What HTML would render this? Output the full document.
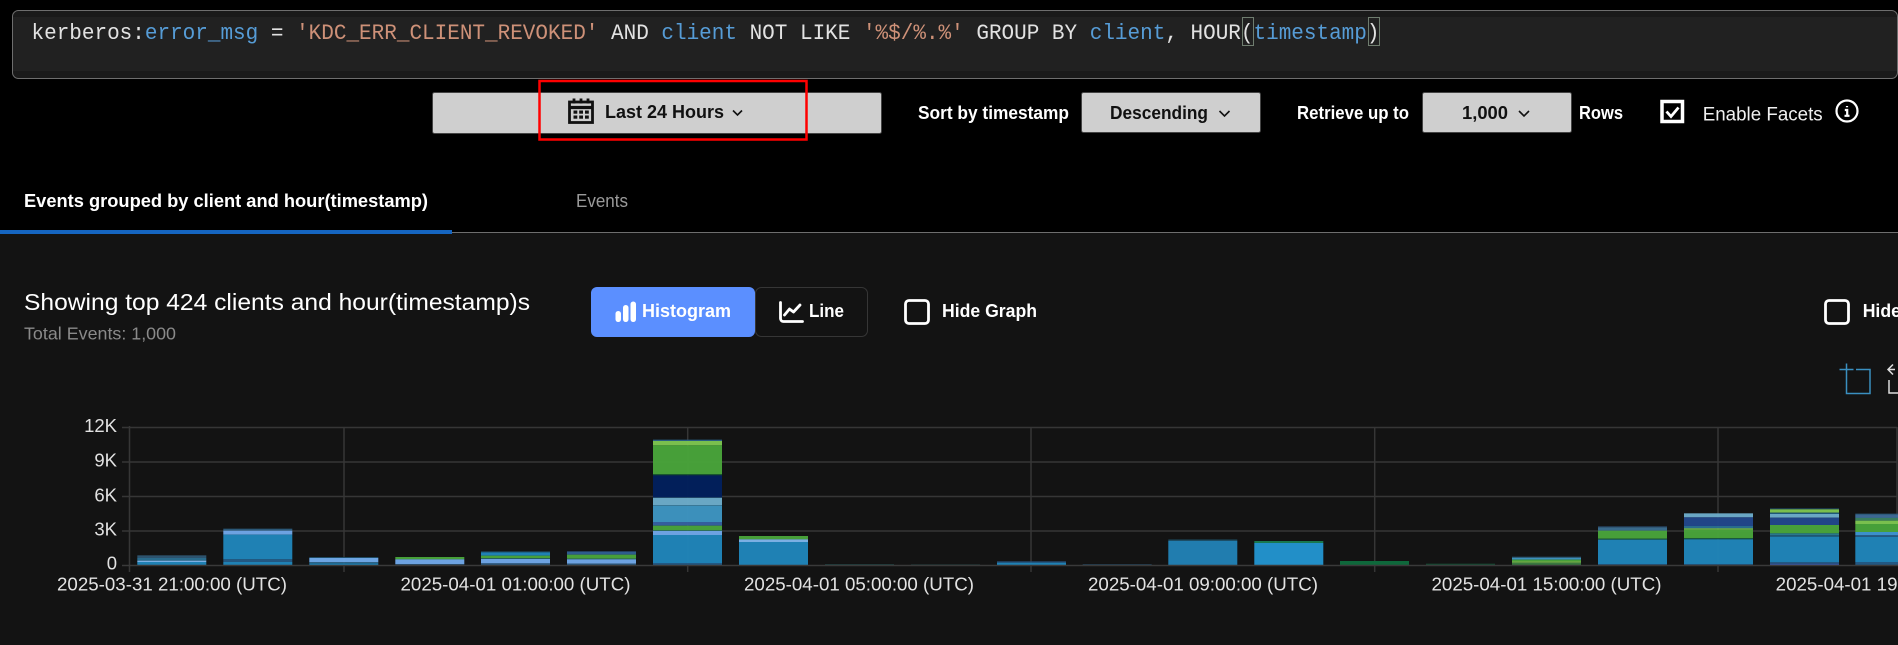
<!DOCTYPE html>
<html><head><meta charset="utf-8"><style>
html,body{margin:0;padding:0;background:#000;width:1898px;height:645px;overflow:hidden}
svg{position:absolute;left:0;top:0;display:block}
text{font-family:"Liberation Sans",sans-serif;white-space:pre}
.b{font-weight:700;fill:#fff;font-size:18px}
.d{font-weight:700;fill:#111;font-size:18px}
.a{fill:#e2e2e2;font-size:18.500px}
.m{font-family:"Liberation Mono",monospace;font-size:22.500px;fill:#e2e2e2}
.u{fill:#569cd6}.s{fill:#ce9178}
</style></head><body>
<svg width="1898" height="645" viewBox="0 0 1898 645" xmlns="http://www.w3.org/2000/svg">
<rect width="1898" height="645" fill="#000"/>
<!-- query -->
<rect x="12.500" y="10.500" width="1885" height="68" rx="6" fill="#1a1a1a" stroke="#6e6e6e"/>
<rect x="13" y="17" width="1884" height="54" fill="#212121"/>
<text class="m" x="31.500" y="39" textLength="1348" lengthAdjust="spacingAndGlyphs">kerberos:<tspan class="u">error_msg</tspan> = <tspan class="s">'KDC_ERR_CLIENT_REVOKED'</tspan> AND <tspan class="u">client</tspan> NOT LIKE <tspan class="s">'%$/%.%'</tspan> GROUP BY <tspan class="u">client</tspan>, HOUR(<tspan class="u">timestamp</tspan>)</text>
<rect x="1242.500" y="17.500" width="11" height="28" fill="none" stroke="#6f7d6f"/>
<rect x="1368.500" y="17.500" width="11" height="28" fill="none" stroke="#6f7d6f"/>
<!-- controls -->
<rect x="432.500" y="92.500" width="449" height="41" rx="2" fill="#cfcfcf" stroke="#444"/>
<rect x="1081.500" y="92.500" width="179" height="40" rx="2" fill="#cfcfcf" stroke="#444"/>
<rect x="1422.500" y="92.500" width="149" height="40" rx="2" fill="#cfcfcf" stroke="#444"/>
<rect x="539.500" y="81" width="267" height="58.500" fill="none" stroke="#f00" stroke-width="2.500"/>
<!-- calendar -->
<g fill="none" stroke="#111">
<rect x="569.500" y="102" width="23" height="20.500" stroke-width="2.800"/>
<path d="M569.500 107.500h23" stroke-width="3.200"/>
<path d="M574 98.500v5M581 98.500v5M588 98.500v5" stroke-width="2.800"/>
</g>
<g fill="#111"><rect x="573.500" y="110.500" width="3.800" height="3.200"/><rect x="579.200" y="110.500" width="3.800" height="3.200"/><rect x="585" y="110.500" width="3.800" height="3.200"/><rect x="573.500" y="115.500" width="3.800" height="3.200"/><rect x="579.200" y="115.500" width="3.800" height="3.200"/><rect x="585" y="115.500" width="3.800" height="3.200"/></g>
<text class="d" x="605" y="118" textLength="119" lengthAdjust="spacingAndGlyphs">Last 24 Hours</text>
<path d="M733 110.500l4.500 4.500 4.500-4.500" fill="none" stroke="#111" stroke-width="1.600"/>
<text class="b" x="918" y="119" textLength="151" lengthAdjust="spacingAndGlyphs">Sort by timestamp</text>
<text class="d" x="1110" y="119" textLength="98" lengthAdjust="spacingAndGlyphs">Descending</text>
<path d="M1219.500 111l5 5 5-5" fill="none" stroke="#111" stroke-width="1.600"/>
<text class="b" x="1297" y="119" textLength="112" lengthAdjust="spacingAndGlyphs">Retrieve up to</text>
<text class="d" x="1462" y="119" textLength="46" lengthAdjust="spacingAndGlyphs">1,000</text>
<path d="M1519 111l5 5 5-5" fill="none" stroke="#111" stroke-width="1.600"/>
<text class="b" x="1579" y="119" textLength="44" lengthAdjust="spacingAndGlyphs">Rows</text>
<rect x="1662" y="101.500" width="20.500" height="20" fill="#000" stroke="#fff" stroke-width="3.500"/>
<path d="M1666.500 111.500l4.500 5 7.500-9" fill="none" stroke="#fff" stroke-width="2.800"/>
<text x="1702.700" y="120.500" fill="#f0f0f0" font-size="19" textLength="120" lengthAdjust="spacingAndGlyphs">Enable Facets</text>
<circle cx="1847" cy="111" r="10.500" fill="none" stroke="#fff" stroke-width="2.200"/>
<path d="M1847 106v1.200M1844.800 110h2.400v5.500M1844.500 115.800h5" fill="none" stroke="#fff" stroke-width="2.200"/>
<!-- tabs -->
<text class="b" x="24" y="207" textLength="404" lengthAdjust="spacingAndGlyphs">Events grouped by client and hour(timestamp)</text>
<text x="576" y="207" fill="#9a9a9a" font-size="18" textLength="52" lengthAdjust="spacingAndGlyphs">Events</text>
<rect x="0" y="233" width="1898" height="412" fill="#131313"/>
<rect x="452" y="232" width="1446" height="1" fill="#6e6e6e"/>
<rect x="0" y="230" width="452" height="4" fill="#1565c0"/>
<!-- heading -->
<text x="24" y="310" fill="#fff" font-size="23.500" textLength="506" lengthAdjust="spacingAndGlyphs">Showing top 424 clients and hour(timestamp)s</text>
<text x="24" y="339.500" fill="#8a8a8a" font-size="17.500" textLength="152" lengthAdjust="spacingAndGlyphs">Total Events: 1,000</text>
<rect x="755.500" y="287.500" width="112" height="49" rx="6" fill="#131313" stroke="#363636"/>
<rect x="591" y="287" width="164" height="50" rx="6" fill="#5b8fff"/>
<g fill="#fff"><rect x="615.500" y="311" width="5.500" height="11" rx="2.700"/><rect x="623" y="305" width="5.500" height="17" rx="2.700"/><rect x="630.500" y="301.500" width="5.500" height="20.500" rx="2.700"/></g>
<text class="b" x="642" y="317" textLength="89" lengthAdjust="spacingAndGlyphs">Histogram</text>
<path d="M780.500 302.500v16a3 3 0 0 0 3 3h19M784.500 315l5-6 4 3 6.500-7" fill="none" stroke="#fff" stroke-width="2.800" stroke-linecap="round" stroke-linejoin="round"/>
<text class="b" x="809" y="317" textLength="35" lengthAdjust="spacingAndGlyphs">Line</text>
<rect x="905.500" y="300.500" width="23" height="23" rx="3.500" fill="none" stroke="#fff" stroke-width="2.800"/>
<text class="b" x="942" y="317" textLength="95" lengthAdjust="spacingAndGlyphs">Hide Graph</text>
<rect x="1825.500" y="300.500" width="23" height="23" rx="3.500" fill="none" stroke="#fff" stroke-width="2.800"/>
<text class="b" x="1862.700" y="317" textLength="95" lengthAdjust="spacingAndGlyphs">Hide Graph</text>
<!-- brush -->
<path d="M1839.500 369.500h14M1846.500 363.500v14M1846.500 377.500v16h23.500v-24h-14" fill="none" stroke="#3a8fc0" stroke-width="1.500"/>
<path d="M1895 369.500h-6m4-5l-5 5 5 5M1889 380v13h9" fill="none" stroke="#ddd" stroke-width="1.500"/>
<!-- grid -->
<g stroke="#363636" stroke-width="1.500" fill="none">
<path d="M122 427.500H1897M122 462H1897M122 496.500H1897M122 531H1897"/>
<path d="M129.500 426V572M344 427V572M687.700 427V572M1031 427V572M1374.700 427V572M1718 427V572M1897 427V566"/>
</g>
<!-- bars: y in 3x zoom units -->
<g transform="translate(0 410) scale(1 .33333)" fill-opacity=".98">
<g><rect x="137.300" y="436" width="69" height="8" fill="#2e5570"/><rect x="137.300" y="444" width="69" height="8" fill="#2a6d8f"/><rect x="137.300" y="452" width="69" height="4" fill="#7eb3e8"/><rect x="137.300" y="456" width="69" height="10" fill="#2084b8"/></g>
<g><rect x="223.300" y="356" width="69" height="6" fill="#2c5a7a"/><rect x="223.300" y="362" width="69" height="12" fill="#6fa5e5"/><rect x="223.300" y="374" width="69" height="74" fill="#2084b8"/><rect x="223.300" y="448" width="69" height="8" fill="#245a85"/><rect x="223.300" y="456" width="69" height="10" fill="#2084b8"/></g>
<g><rect x="309.300" y="441" width="69" height="3" fill="#1f4a63"/><rect x="309.300" y="444" width="69" height="13" fill="#6fa8e8"/><rect x="309.300" y="457" width="69" height="3" fill="#1f5a7a"/><rect x="309.300" y="460" width="69" height="6" fill="#2084b8"/></g>
<g><rect x="395.300" y="441" width="69" height="7" fill="#48a23a"/><rect x="395.300" y="448" width="69" height="14" fill="#6fa5e5"/><rect x="395.300" y="462" width="69" height="4" fill="#2a5070"/></g>
<g><rect x="481" y="424" width="69" height="3" fill="#1f4a63"/><rect x="481" y="427" width="69" height="10" fill="#2084b8"/><rect x="481" y="437" width="69" height="8" fill="#48a23a"/><rect x="481" y="445" width="69" height="2" fill="#1f5a7a"/><rect x="481" y="447" width="69" height="13" fill="#6fa5e5"/><rect x="481" y="460" width="69" height="6" fill="#2a5a80"/></g>
<g><rect x="567" y="423" width="69" height="3" fill="#243f60"/><rect x="567" y="426" width="69" height="8" fill="#2f5e90"/><rect x="567" y="434" width="69" height="12" fill="#48a23a"/><rect x="567" y="446" width="69" height="2" fill="#2a6d70"/><rect x="567" y="448" width="69" height="13" fill="#6fa5e5"/><rect x="567" y="461" width="69" height="5" fill="#2a5a80"/></g>
<g><rect x="653" y="89" width="69" height="4" fill="#2a5f85"/><rect x="653" y="93" width="69" height="13" fill="#7cc350"/><rect x="653" y="106" width="69" height="86" fill="#48a23a"/><rect x="653" y="192" width="69" height="4" fill="#1a5a30"/><rect x="653" y="196" width="69" height="66" fill="#02205c"/><rect x="653" y="262" width="69" height="2" fill="#2a5a7a"/><rect x="653" y="264" width="69" height="21" fill="#6caac8"/><rect x="653" y="285" width="69" height="3" fill="#3a7a9a"/><rect x="653" y="288" width="69" height="48" fill="#3d93bf"/><rect x="653" y="336" width="69" height="11" fill="#35609f"/><rect x="653" y="347" width="69" height="14" fill="#48a23a"/><rect x="653" y="361" width="69" height="2" fill="#2a6d70"/><rect x="653" y="363" width="69" height="12" fill="#6fa5e5"/><rect x="653" y="375" width="69" height="84" fill="#2084b8"/><rect x="653" y="459" width="69" height="7" fill="#245a85"/></g>
<g><rect x="739" y="378" width="69" height="10" fill="#48a23a"/><rect x="739" y="388" width="69" height="8" fill="#7db2e8"/><rect x="739" y="396" width="69" height="70" fill="#2084b8"/></g>
<rect x="825" y="462" width="69" height="4" fill="#1c3a3a"/>
<rect x="911" y="463" width="69" height="3" fill="#1c3a3a"/>
<g><rect x="997" y="454" width="69" height="4" fill="#27507a"/><rect x="997" y="458" width="69" height="8" fill="#2084b8"/></g>
<rect x="1082.700" y="462" width="69" height="4" fill="#1f3a4f"/>
<g><rect x="1168.300" y="388" width="69" height="4" fill="#1c3f4f"/><rect x="1168.300" y="392" width="69" height="74" fill="#2280b3"/></g>
<g><rect x="1254.300" y="393" width="69" height="6" fill="#1a7a50"/><rect x="1254.300" y="399" width="69" height="67" fill="#2392cc"/></g>
<rect x="1340" y="453" width="69" height="13" fill="#0e6a3c"/>
<rect x="1426" y="461" width="69" height="5" fill="#144a33"/>
<g><rect x="1512" y="440" width="69" height="3" fill="#284f66"/><rect x="1512" y="443" width="69" height="6" fill="#3d93bf"/><rect x="1512" y="449" width="69" height="5" fill="#48a23a"/><rect x="1512" y="454" width="69" height="4" fill="#7cc350"/><rect x="1512" y="458" width="69" height="8" fill="#3a7a40"/></g>
<g><rect x="1598" y="349" width="69" height="3" fill="#2a4a6a"/><rect x="1598" y="352" width="69" height="10" fill="#3a6c8f"/><rect x="1598" y="362" width="69" height="24" fill="#48a23a"/><rect x="1598" y="386" width="69" height="3" fill="#1a5a40"/><rect x="1598" y="389" width="69" height="73" fill="#2084b8"/><rect x="1598" y="462" width="69" height="4" fill="#245a85"/></g>
<g><rect x="1684" y="310" width="69" height="12" fill="#6caac8"/><rect x="1684" y="322" width="69" height="26" fill="#22468a"/><rect x="1684" y="348" width="69" height="7" fill="#2a6d90"/><rect x="1684" y="355" width="69" height="4" fill="#7cc350"/><rect x="1684" y="359" width="69" height="25" fill="#48a23a"/><rect x="1684" y="384" width="69" height="4" fill="#1a5a40"/><rect x="1684" y="388" width="69" height="74" fill="#2084b8"/><rect x="1684" y="462" width="69" height="4" fill="#245a85"/></g>
<g><rect x="1770" y="295" width="69" height="3" fill="#1f4a63"/><rect x="1770" y="298" width="69" height="10" fill="#7cc350"/><rect x="1770" y="308" width="69" height="4" fill="#1f5a7a"/><rect x="1770" y="312" width="69" height="11" fill="#6caac8"/><rect x="1770" y="323" width="69" height="22" fill="#22468a"/><rect x="1770" y="345" width="69" height="25" fill="#48a23a"/><rect x="1770" y="370" width="69" height="6" fill="#2a7a90"/><rect x="1770" y="376" width="69" height="4" fill="#1f5a7a"/><rect x="1770" y="380" width="69" height="76" fill="#2084b8"/><rect x="1770" y="456" width="69" height="5" fill="#245a85"/><rect x="1770" y="461" width="69" height="5" fill="#3a5aa8"/></g>
<g><rect x="1855.300" y="311" width="43" height="5" fill="#2f5e80"/><rect x="1855.300" y="316" width="43" height="4" fill="#4a78b0"/><rect x="1855.300" y="320" width="43" height="4" fill="#3a6c8f"/><rect x="1855.300" y="324" width="43" height="8" fill="#3a8060"/><rect x="1855.300" y="332" width="43" height="10" fill="#7cc350"/><rect x="1855.300" y="342" width="43" height="24" fill="#48a23a"/><rect x="1855.300" y="366" width="43" height="10" fill="#3d93cf"/><rect x="1855.300" y="376" width="43" height="5" fill="#245a85"/><rect x="1855.300" y="381" width="43" height="75" fill="#2084b8"/><rect x="1855.300" y="456" width="43" height="10" fill="#245a85"/></g>
</g>
<path d="M122 565.500H1898" stroke="#3a3a3a" stroke-width="1.600"/>
<!-- axis labels -->
<g text-anchor="end">
<text class="a" x="117" y="432">12K</text><text class="a" x="117" y="466.700">9K</text><text class="a" x="117" y="501.300">6K</text><text class="a" x="117" y="535.300">3K</text><text class="a" x="117" y="569.300">0</text>
</g>
<text class="a" x="57" y="590.700" textLength="230" lengthAdjust="spacingAndGlyphs">2025-03-31 21:00:00 (UTC)</text>
<text class="a" x="400.500" y="590.700" textLength="230" lengthAdjust="spacingAndGlyphs">2025-04-01 01:00:00 (UTC)</text>
<text class="a" x="744" y="590.700" textLength="230" lengthAdjust="spacingAndGlyphs">2025-04-01 05:00:00 (UTC)</text>
<text class="a" x="1088" y="590.700" textLength="230" lengthAdjust="spacingAndGlyphs">2025-04-01 09:00:00 (UTC)</text>
<text class="a" x="1431.500" y="590.700" textLength="230" lengthAdjust="spacingAndGlyphs">2025-04-01 15:00:00 (UTC)</text>
<text class="a" x="1775.700" y="590.700" textLength="230" lengthAdjust="spacingAndGlyphs">2025-04-01 19:00:00 (UTC)</text>
</svg>
</body></html>
